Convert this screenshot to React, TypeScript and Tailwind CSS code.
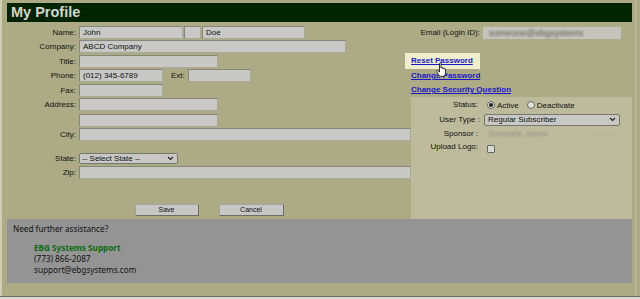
import React from "react";

const F = "font-['Liberation_Sans',Arial,sans-serif]";

function Box({ w, children, h = "h-[13px]" }: { w: string; children?: React.ReactNode; h?: string }) {
  return (
    <div className={`${w} ${h} bg-[#c8c8c6] border border-[#868678] border-r-[#a8a898] border-b-[#a8a898] text-[8px] leading-[11px] pl-[3px] text-[#111] whitespace-nowrap overflow-hidden`}>
      {children}
    </div>
  );
}

function Row({ label, mt, children }: { label: string; mt: string; children?: React.ReactNode }) {
  return (
    <div className={`flex items-center ${mt}`}>
      <div className="w-[69px] text-right text-[8px] leading-[10px] text-[#111]">{label}</div>
      <div className="ml-[3px] flex items-center">{children}</div>
    </div>
  );
}

function Chevron() {
  return (
    <svg width="7" height="5" viewBox="0 0 7 5" className="mr-[3px]">
      <path d="M1 1 L3.5 3.5 L6 1" fill="none" stroke="#222" strokeWidth="1.2" />
    </svg>
  );
}

function Hand() {
  return (
    <svg width="11" height="15" viewBox="0 0 11 15" className="absolute left-[436px] top-[62px]">
      <path
        d="M3.5 1.5 C3.5 0.6 5 0.6 5 1.5 V6 C5 5.3 6.5 5.3 6.5 6 V6.6 C6.5 5.9 8 5.9 8 6.6 V7.2 C8 6.5 9.5 6.5 9.5 7.2 V10.8 C9.5 12.8 8.6 14.3 6.8 14.3 H4.8 C3.4 14.3 2.9 13.4 2 12 L0.7 9.6 C0.3 8.8 1.3 8 2 8.7 L3.5 10.2 Z"
        fill="#fff"
        stroke="#000"
        strokeWidth="0.8"
      />
    </svg>
  );
}

export default function App() {
  return (
    <div className={`w-[640px] h-[299px] bg-[#adab85] flex flex-col overflow-hidden relative ${F}`}>
      <div className="h-[296px] flex border-l-2 border-[#cfcdb2]">
        <div className="pl-[5px] pt-[3px] w-[630px]">
          <div className="w-[625px] h-[19px] bg-[#002400] pl-[4px] text-[14.5px] font-bold leading-[19px] text-[#d6d6cc]">
            My Profile
          </div>
          <div className="flex w-[625px]">
            {/* left column */}
            <div className="w-[404px] flex flex-col pb-[3px]">
              <Row label="Name:" mt="mt-[4px]">
                <Box w="w-[104px]">John</Box>
                <div className="ml-px"><Box w="w-[17px]" /></div>
                <div className="ml-[1px]"><Box w="w-[103px]">Doe</Box></div>
              </Row>
              <Row label="Company:" mt="mt-px">
                <Box w="w-[267px]">ABCD Company</Box>
              </Row>
              <Row label="Title:" mt="mt-[2px]">
                <Box w="w-[139px]" />
              </Row>
              <Row label="Phone:" mt="mt-px">
                <Box w="w-[84px]">(012) 345-6789</Box>
                <div className="ml-[8px] w-[17px] text-[8px] leading-[10px] text-[#111]">Ext:</div>
                <div className="ml-[0px]"><Box w="w-[63px]" /></div>
              </Row>
              <Row label="Fax:" mt="mt-[2px]">
                <Box w="w-[84px]" />
              </Row>
              <Row label="Address:" mt="mt-px">
                <Box w="w-[139px]" />
              </Row>
              <Row label="" mt="mt-[3px]">
                <Box w="w-[139px]" />
              </Row>
              <Row label="City:" mt="mt-px">
                <Box w="w-[332px]" />
              </Row>
              <Row label="State:" mt="mt-[12px]">
                <div className="w-[99px] h-[11px] bg-[#c8c8c6] border border-[#777770] rounded-[2px] flex items-center justify-between text-[8px] leading-[9px] pl-[2px] text-[#111]">
                  <span>-- Select State --</span>
                  <Chevron />
                </div>
              </Row>
              <Row label="Zip:" mt="mt-[2px]">
                <Box w="w-[332px]" />
              </Row>
              <div className="mt-[25px] flex justify-center gap-[20px]">
                <div className="w-[64px] h-[12px] bg-[#c6c6c4] border border-[#a4a49c] border-r-[#6c6c64] border-b-[#6c6c64] text-[7px] leading-[10px] text-center text-[#111]">Save</div>
                <div className="w-[65px] h-[12px] bg-[#c6c6c4] border border-[#a4a49c] border-r-[#6c6c64] border-b-[#6c6c64] text-[7px] leading-[10px] text-center text-[#111]">Cancel</div>
              </div>
            </div>
            {/* right column */}
            <div className="w-[221px] flex flex-col">
              <div className="flex items-center mt-[5px]">
                <div className="w-[69px] text-right text-[8px] leading-[10px] text-[#111] whitespace-nowrap">Email (Login ID):</div>
                <div className="ml-[3px] w-[138px] h-[12px] bg-[#c4c4bc] pl-[6px] flex items-center">
                  <span className="text-[9px] leading-[10px] text-[#5a5a58] blur-[1.2px] whitespace-nowrap">someone@ebgsystems</span>
                </div>
              </div>
              <div className="mt-[14px] -ml-[6px] w-[75px] h-[16px] bg-[#efedcc] pl-[6px] text-[8px] font-bold leading-[16px] text-[#1818c8] underline">
                Reset Password
              </div>
              <div className="h-[13px] text-[8px] font-bold leading-[13px] text-[#1818c8] underline">Change Password</div>
              <div className="h-[15px] text-[8px] font-bold leading-[15px] text-[#1818c8] underline">Change Security Question</div>
              <div className="flex-1 bg-[#bebb9c] pt-px">
                <div className="flex items-center h-[14px]">
                  <div className="w-[67px] text-right text-[8px] leading-[10px] text-[#111]">Status:</div>
                  <div className="ml-[9px] flex items-center text-[8px] leading-[10px] text-[#111]">
                    <div className="w-[8px] h-[8px] rounded-full border border-[#666] bg-[#e0e0dc] flex items-center justify-center">
                      <div className="w-[4px] h-[4px] rounded-full bg-[#222]" />
                    </div>
                    <span className="ml-[2px] mt-[2px]">Active</span>
                    <div className="ml-[8px] w-[8px] h-[8px] rounded-full border border-[#666] bg-[#e0e0dc]" />
                    <span className="ml-[2px] mt-[2px]">Deactivate</span>
                  </div>
                </div>
                <div className="flex items-center h-[15px]">
                  <div className="w-[69px] text-right text-[8px] leading-[10px] text-[#111]">User Type :</div>
                  <div className="ml-[4px] w-[136px] h-[12px] bg-[#c8c8c6] border border-[#777770] rounded-[2px] flex items-center justify-between text-[8px] leading-[10px] pl-[3px] text-[#111]">
                    <span>Regular Subscriber</span>
                    <Chevron />
                  </div>
                </div>
                <div className="flex items-center h-[13px]">
                  <div className="w-[67px] text-right text-[8px] leading-[10px] text-[#111]">Sponsor :</div>
                  <div className="ml-[6px] w-[136px] h-[11px] pl-[4px] flex items-center justify-between">
                    <span className="text-[8px] leading-[11px] text-[#8a8a80] blur-[1px] whitespace-nowrap">Someone, Name</span>
                    <span className="text-[8px] leading-[11px] text-[#9a9a90] blur-[1px] whitespace-nowrap mr-[4px]">----------</span>
                  </div>
                </div>
                <div className="flex items-start h-[15px] pt-[2px]">
                  <div className="w-[67px] text-right text-[8px] leading-[10px] text-[#111]">Upload Logo:</div>
                  <div className="ml-[9px] mt-[3px] w-[8px] h-[8px] rounded-[1px] border border-[#666] bg-[#d8d8d2]" />
                </div>
              </div>
            </div>
          </div>
          <div className="w-[625px] h-[64px] bg-[#949494] pl-[6px] pt-[4px] font-['Noto_Sans',Tahoma,sans-serif] text-[8.2px] leading-[11px] text-[#111]">
            <div>Need further assistance?</div>
            <div className="pl-[21px] mt-[8px]">
              <div className="font-bold text-[#0c6a0c]">EBG Systems Support</div>
              <div>(773) 866-2087</div>
              <div>support@ebgsystems.com</div>
            </div>
          </div>
        </div>
        <div className="w-[1px] ml-[3px] bg-[#c0be9e]" />
      </div>
      <div className="h-px bg-[#6e6e62]" />
      <div className="h-[2px] bg-[#d6d6d2]" />
      <Hand />
    </div>
  );
}
